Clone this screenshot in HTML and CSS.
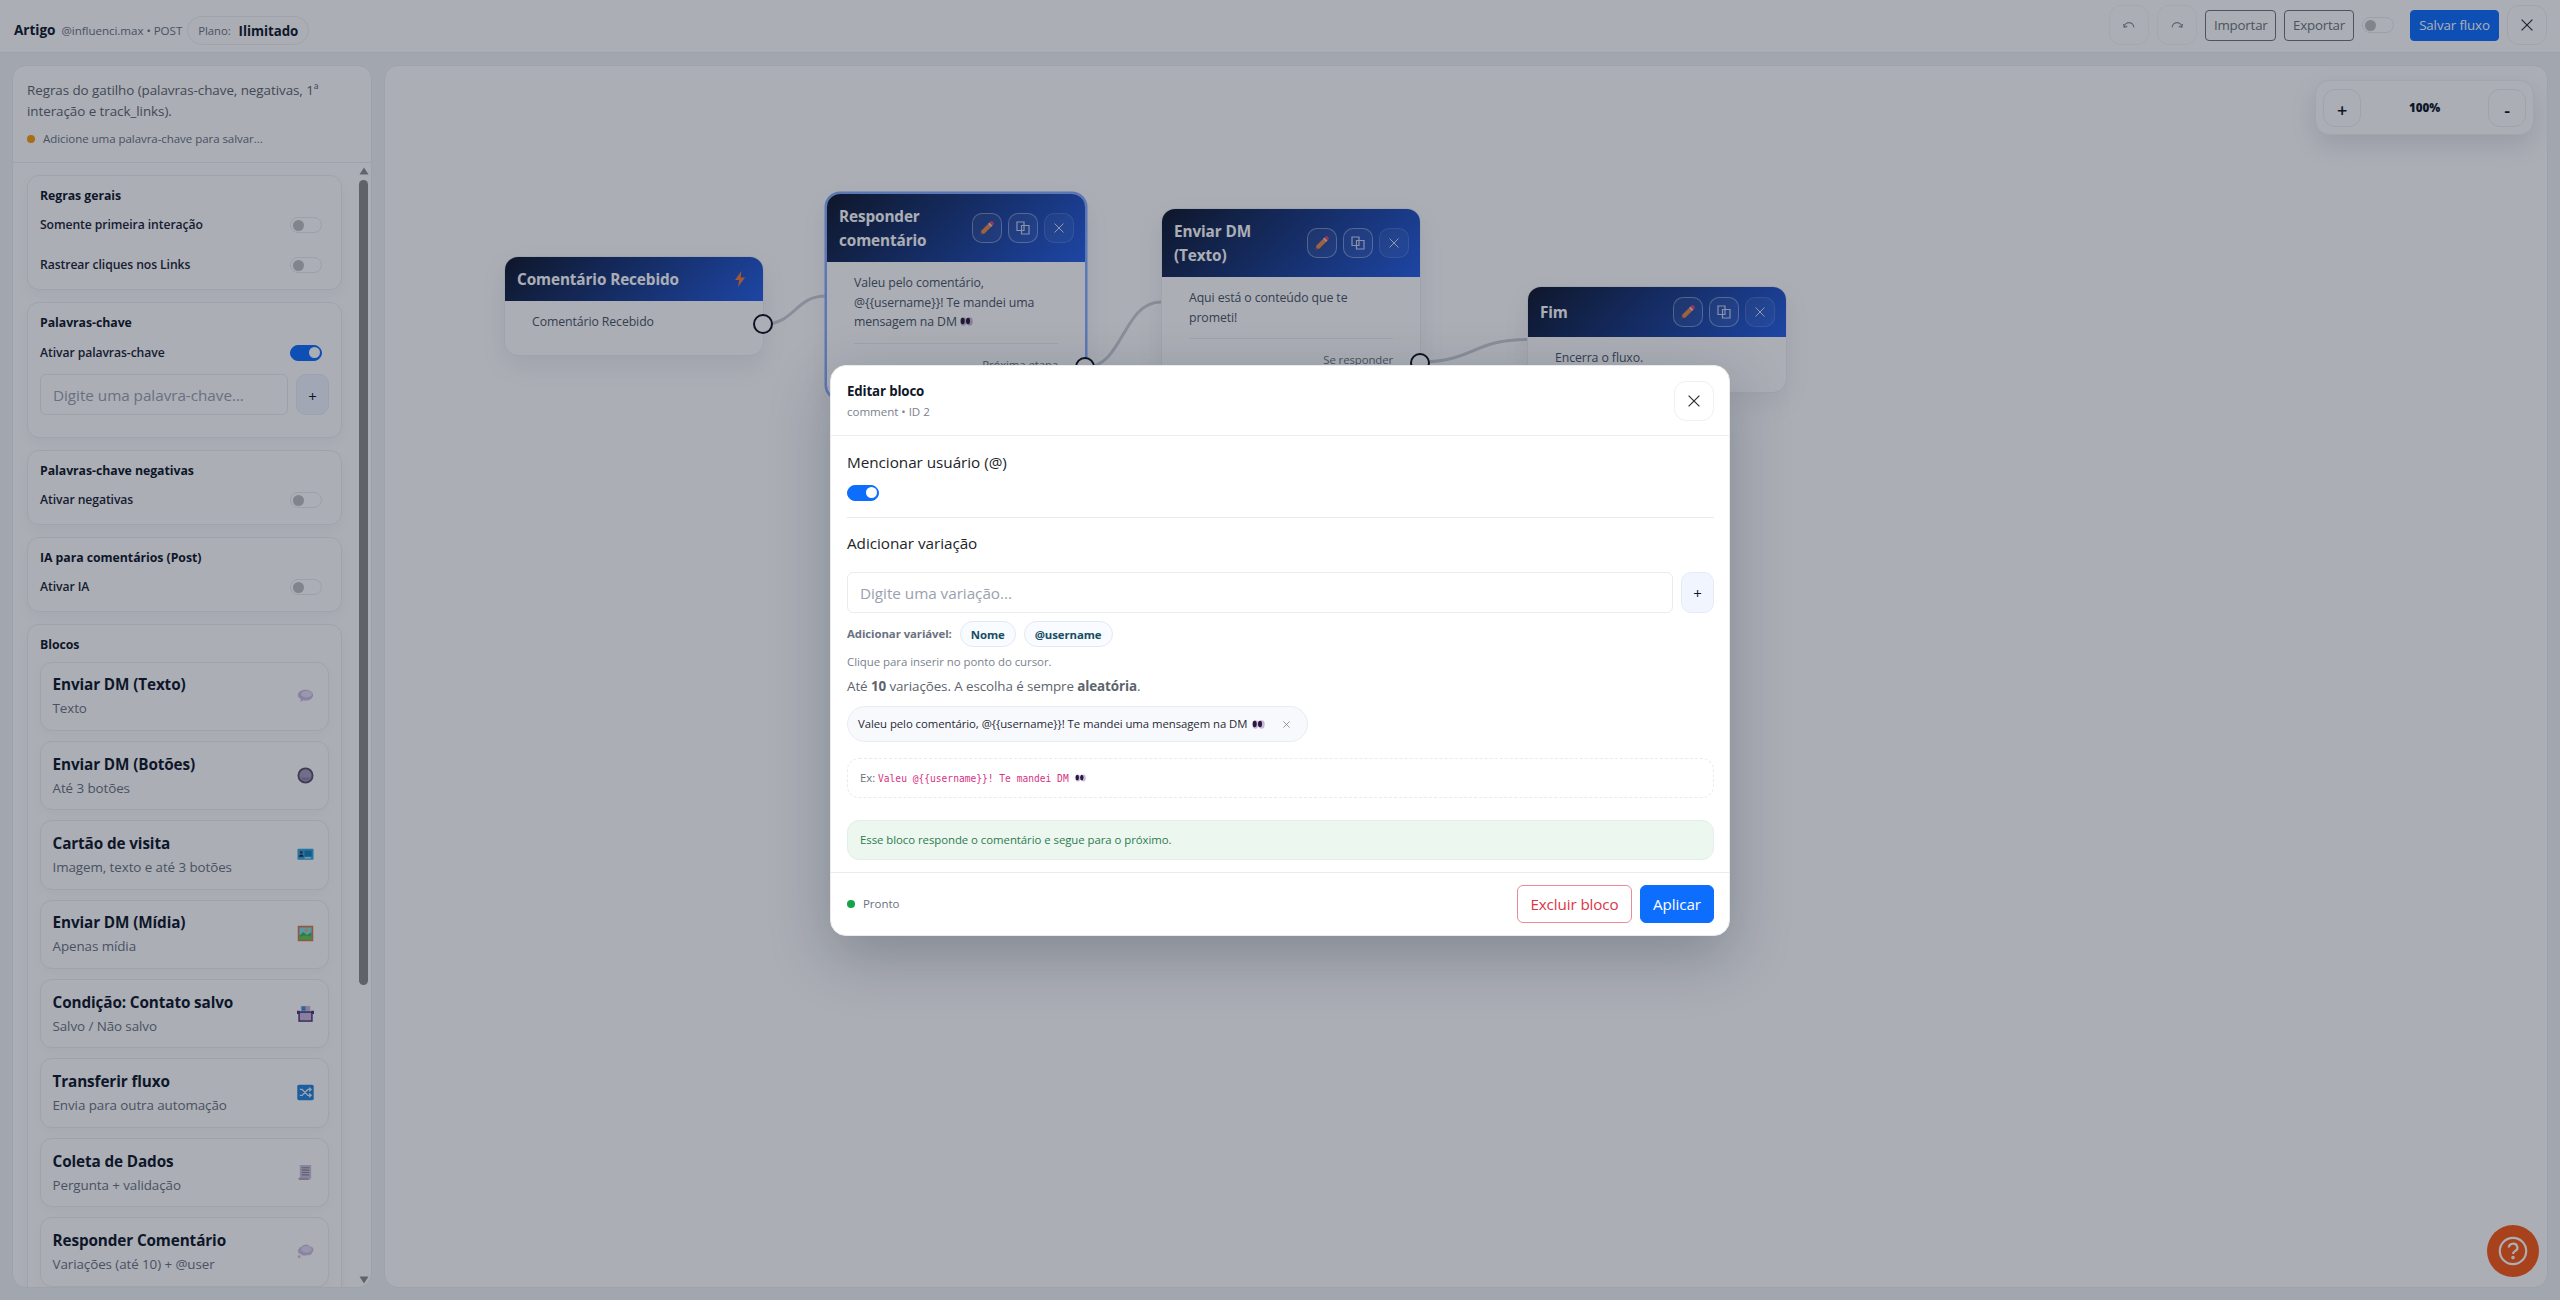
FILE: index.html
```html
<!DOCTYPE html>
<html lang="pt-BR">
<head>
    <meta charset="UTF-8">
    <title>Editor de fluxo</title>
    <link rel="stylesheet" href="styles.css">
</head>
<body>
    <svg class="sprite" width="0" height="0">
        <symbol id="i-x" viewBox="0 0 12 12"><path d="M.6.6l10.8 10.8M11.4.6L.6 11.4" fill="none" stroke="currentColor" stroke-width="1.2"/></symbol>
        <symbol id="i-copy" viewBox="0 0 14 14"><path d="M1 1h7v8.500H1zM5.500 4.500h7.500V13H5.500z" fill="none" stroke="currentColor" stroke-width="1.200"/></symbol>
        <symbol id="i-pencil" viewBox="0 0 16 16">
            <path d="M1.500 14.500l1-4L10.300 2.700l3 3-7.800 7.800z" fill="#f0884a"/>
            <path d="M9.200 3.800l1.300-1.300 3 3-1.300 1.300z" fill="#d6d3dd"/>
            <path d="M10.500 2.500l1-1a1.500 1.500 0 0 1 2.100 0l.9.900a1.500 1.500 0 0 1 0 2.100l-1 1z" fill="#e8485a"/>
            <path d="M1.500 14.500l.6-2.200 1.600 1.600z" fill="#6b4a5e"/>
        </symbol>
        <symbol id="i-bolt" viewBox="0 0 10 16"><path d="M6.400 0L0 9h4.200L3 16l7-9.500H5.600z" fill="#f57a3c"/></symbol>
        <symbol id="i-eyes" viewBox="0 0 13 9">
            <ellipse cx="3.300" cy="4.500" rx="3" ry="4.200" fill="#c9b6dc"/><ellipse cx="9.700" cy="4.500" rx="3" ry="4.200" fill="#c9b6dc"/>
            <ellipse cx="2.700" cy="4" rx="2" ry="3.300" fill="#2b1a3a"/><ellipse cx="8" cy="4" rx="2" ry="3.300" fill="#2b1a3a"/>
        </symbol>
        <symbol id="i-chat" viewBox="0 0 18 18">
            <path d="M9 3c4.600 0 8 2.500 8 5.700s-3.400 5.600-8 5.600c-.8 0-1.600-.1-2.300-.2L3.500 16l.6-3.200C2.200 11.800 1 10.400 1 8.700 1 5.500 4.400 3 9 3z" fill="#cbb8e4"/>
            <ellipse cx="10" cy="7.600" rx="5.800" ry="3.500" fill="#e4dcf0"/>
        </symbol>
        <symbol id="i-thought" viewBox="0 0 18 18">
            <path d="M5 4a4.500 3.500 0 0 1 8.500-.3A3.500 3.500 0 0 1 16 10a4 3.500 0 0 1-5.500 2.700A4.500 3 0 0 1 4 12 3.500 3.500 0 0 1 2 6a3.500 3 0 0 1 3-2z" fill="#cdbfe2"/>
            <ellipse cx="10" cy="6.800" rx="5.500" ry="3.600" fill="#e2daee"/>
            <circle cx="2.300" cy="14.500" r="1.500" fill="#cdbfe2"/>
        </symbol>
        <symbol id="i-radio" viewBox="0 0 18 18"><circle cx="9" cy="9" r="7.500" fill="#a79db8" stroke="#584f68" stroke-width="2"/><path d="M4 11a5.500 5.500 0 0 0 10 0z" fill="#9080ae"/></symbol>
        <symbol id="i-card" viewBox="0 0 18 18">
            <rect x=".5" y="3" width="17" height="11.500" rx="1" fill="#30a8e0"/>
            <rect x="8" y="5" width="7.500" height="6" fill="#1880bd"/><rect x="8" y="12" width="6.500" height="1.200" fill="#eee"/>
            <circle cx="4.500" cy="6.800" r="1.500" fill="#47304f"/><path d="M2 11.500c0-3.500 5-3.500 5 0z" fill="#2b2038"/>
        </symbol>
        <symbol id="i-image" viewBox="0 0 18 18">
            <rect x=".8" y=".8" width="16.400" height="16.400" fill="#d77b4c"/><rect x="2.600" y="2.600" width="12.800" height="12.800" fill="#85dcec"/>
            <path d="M2.600 11l4-3.500 4 3 4.800-3v8H2.600z" fill="#3bb46b"/><path d="M2.600 13c4-2 9-2 12.800-.3v2.700H2.600z" fill="#6fca3d"/><circle cx="10" cy="5.500" r="1.600" fill="#f5b32b"/>
        </symbol>
        <symbol id="i-ballot" viewBox="0 0 18 18">
            <rect x="4" y="1" width="10" height="8" fill="#c9b9db"/><rect x="5" y="1.500" width="4" height="4.500" fill="#2f92d8"/>
            <rect x="2.200" y="7.500" width="13.600" height="9.500" fill="#c9b9db" stroke="#54357f" stroke-width="1.600"/>
            <path d="M0 6h3v3.500H0zM15 6h3v3.500h-3z" fill="#54357f"/>
        </symbol>
        <symbol id="i-shuffle" viewBox="0 0 18 18">
            <rect x=".3" y=".8" width="17.400" height="16.400" rx="1.800" fill="#2585dc"/>
            <path d="M3 5.800h2.500l6 6.200H14M3 12h2.500l6-6.200H14M12.800 3.800l2.200 2-2.200 2M12.800 10l2.200 2-2.200 2" fill="none" stroke="#e9effa" stroke-width="1.300"/>
        </symbol>
        <symbol id="i-receipt" viewBox="0 0 18 18">
            <path d="M3 1h12v14l-2 2H4l-1-2z" fill="#cdc4d9"/><path d="M1.500 14.500H12c0 1.500.4 2.500 1.500 2.500H3.500c-1.400 0-2-1-2-2.500z" fill="#b3a5c6"/>
            <path d="M5 4h8M5 6.500h8M5 9h8M5 11.500h8" stroke="#8d8499" stroke-width="1.200"/>
        </symbol>
        <symbol id="i-undo" viewBox="0 0 12 9"><path d="M1.200 6A4.800 4.600 0 0 1 10.800 6.500M.5 2.800l.6 3.400 3.200-.8" fill="none" stroke="currentColor" stroke-width="1.100"/></symbol>
    </svg>

    <header class="topbar">
        <div class="topbar-info">
            <span class="topbar-title">Artigo</span>
            <span class="topbar-meta">@influenci.max • POST</span>
            <span class="plan">Plano: <b>Ilimitado</b></span>
        </div>
        <div class="topbar-actions">
            <button class="icon-btn faded"><svg width="12" height="9"><use href="#i-undo"/></svg></button>
            <button class="icon-btn faded redo"><svg class="flip" width="12" height="9"><use href="#i-undo"/></svg></button>
            <button class="btn btn-sm btn-outline">Importar</button>
            <button class="btn btn-sm btn-outline export">Exportar</button>
            <span class="switch auto"></span>
            <button class="btn btn-sm btn-primary">Salvar fluxo</button>
            <button class="icon-btn close"><svg width="12" height="12"><use href="#i-x"/></svg></button>
        </div>
    </header>

    <main class="layout">
        <aside class="sidebar">
            <div class="sidebar-head">
                <div class="sidebar-desc">Regras do gatilho (palavras-chave, negativas, 1ª interação e track_links).</div>
                <div class="status"><span class="dot warn"></span>Adicione uma palavra-chave para salvar...</div>
            </div>
            <div class="sidebar-body">
                <div class="sidebar-scroll">
                    <section class="card">
                        <h6>Regras gerais</h6>
                        <div class="row">Somente primeira interação <span class="switch"></span></div>
                        <div class="row">Rastrear cliques nos Links <span class="switch"></span></div>
                    </section>
                    <section class="card card-keywords">
                        <h6>Palavras-chave</h6>
                        <div class="row">Ativar palavras-chave <span class="switch on"></span></div>
                        <div class="input-row">
                            <input type="text" placeholder="Digite uma palavra-chave...">
                            <button class="add-btn">+</button>
                        </div>
                    </section>
                    <section class="card">
                        <h6>Palavras-chave negativas</h6>
                        <div class="row">Ativar negativas <span class="switch"></span></div>
                    </section>
                    <section class="card">
                        <h6>IA para comentários (Post)</h6>
                        <div class="row">Ativar IA <span class="switch"></span></div>
                    </section>
                    <section class="card card-blocks">
                        <h6>Blocos</h6>
                        <div class="block"><div><b>Enviar DM (Texto)</b><small>Texto</small></div><svg width="17" height="17"><use href="#i-chat"/></svg></div>
                        <div class="block"><div><b>Enviar DM (Botões)</b><small>Até 3 botões</small></div><svg width="17" height="17"><use href="#i-radio"/></svg></div>
                        <div class="block"><div><b>Cartão de visita</b><small>Imagem, texto e até 3 botões</small></div><svg width="17" height="17"><use href="#i-card"/></svg></div>
                        <div class="block"><div><b>Enviar DM (Mídia)</b><small>Apenas mídia</small></div><svg width="17" height="17"><use href="#i-image"/></svg></div>
                        <div class="block"><div><b>Condição: Contato salvo</b><small>Salvo / Não salvo</small></div><svg width="17" height="17"><use href="#i-ballot"/></svg></div>
                        <div class="block"><div><b>Transferir fluxo</b><small>Envia para outra automação</small></div><svg width="17" height="17"><use href="#i-shuffle"/></svg></div>
                        <div class="block"><div><b>Coleta de Dados</b><small>Pergunta + validação</small></div><svg width="17" height="17"><use href="#i-receipt"/></svg></div>
                        <div class="block"><div><b>Responder Comentário</b><small>Variações (até 10) + @user</small></div><svg width="17" height="17"><use href="#i-thought"/></svg></div>
                    </section>
                </div>
                <div class="scrollbar">
                    <svg width="10" height="8" viewBox="0 0 10 8"><path d="M5 .5L9.500 7.500H.5z"/></svg>
                    <div class="track"><div class="thumb"></div></div>
                    <svg width="10" height="8" viewBox="0 0 10 8"><path d="M.5.5h9L5 7.500z"/></svg>
                </div>
            </div>
        </aside>

        <section class="canvas">
            <svg class="edges" width="2162" height="1221">
                <path d="M379 258C410 258 410 230 441 230"/>
                <path d="M701 301C738 301 738 236 776 236"/>
                <path d="M1035 296C1088 296 1088 273.500 1142 273.500"/>
            </svg>

            <div class="node n1">
                <div class="node-head">Comentário Recebido <svg class="bolt" width="10" height="16"><use href="#i-bolt"/></svg></div>
                <div class="node-body">Comentário Recebido</div>
                <span class="port"></span>
            </div>

            <div class="node n2 selected">
                <div class="node-head">Responder<br>comentário
                    <div class="tools">
                        <span><svg width="16" height="16"><use href="#i-pencil"/></svg></span>
                        <span><svg width="14" height="14"><use href="#i-copy"/></svg></span>
                        <span class="del"><svg width="10" height="10"><use href="#i-x"/></svg></span>
                    </div>
                </div>
                <div class="node-body">Valeu pelo comentário, @{{username}}! Te mandei uma mensagem na DM <svg width="13" height="9"><use href="#i-eyes"/></svg>
                    <div class="node-out">Próxima etapa</div>
                </div>
                <span class="port"></span>
            </div>

            <div class="node n3">
                <div class="node-head">Enviar DM<br>(Texto)
                    <div class="tools">
                        <span><svg width="16" height="16"><use href="#i-pencil"/></svg></span>
                        <span><svg width="14" height="14"><use href="#i-copy"/></svg></span>
                        <span class="del"><svg width="10" height="10"><use href="#i-x"/></svg></span>
                    </div>
                </div>
                <div class="node-body">Aqui está o conteúdo que te<br>prometi!
                    <div class="node-out">Se responder</div>
                </div>
                <span class="port"></span>
            </div>

            <div class="node n4">
                <div class="node-head">Fim
                    <div class="tools">
                        <span><svg width="16" height="16"><use href="#i-pencil"/></svg></span>
                        <span><svg width="14" height="14"><use href="#i-copy"/></svg></span>
                        <span class="del"><svg width="10" height="10"><use href="#i-x"/></svg></span>
                    </div>
                </div>
                <div class="node-body">Encerra o fluxo.</div>
            </div>

            <div class="zoom">
                <button>+</button>
                <span>100%</span>
                <button>-</button>
            </div>
        </section>
    </main>

    <div class="help">
        <svg width="30" height="30" viewBox="0 0 30 30" fill="none" stroke="#fff" stroke-width="2.200">
            <circle cx="15" cy="15" r="13.200"/>
            <path d="M10.800 11.600a4.300 3.900 0 1 1 6.200 3.500c-1.500.8-2 1.400-2 3"/>
            <circle cx="15" cy="21.600" r=".7" fill="#fff"/>
        </svg>
    </div>

    <div class="overlay">
        <div class="modal">
            <div class="modal-head">
                <div>
                    <div class="modal-title">Editar bloco</div>
                    <div class="modal-sub">comment • ID 2</div>
                </div>
                <button class="icon-btn close"><svg width="12" height="12"><use href="#i-x"/></svg></button>
            </div>
            <div class="modal-body">
                <label>Mencionar usuário (@)</label>
                <span class="switch on"></span>
                <div class="divider"></div>
                <label>Adicionar variação</label>
                <div class="input-row">
                    <input type="text" placeholder="Digite uma variação...">
                    <button class="add-btn">+</button>
                </div>
                <div class="vars"><b>Adicionar variável:</b><span class="pill">Nome</span><span class="pill">@username</span></div>
                <div class="hint">Clique para inserir no ponto do cursor.</div>
                <div class="limit">Até <b>10</b> variações. A escolha é sempre <b>aleatória</b>.</div>
                <div class="chip">Valeu pelo comentário, @{{username}}! Te mandei uma mensagem na DM <svg class="eyes" width="13" height="9"><use href="#i-eyes"/></svg><svg class="remove" width="7" height="7"><use href="#i-x"/></svg></div>
                <div class="example">Ex: <code>Valeu @{{username}}! Te mandei DM</code> <svg width="11" height="8"><use href="#i-eyes"/></svg></div>
                <div class="info">Esse bloco responde o comentário e segue para o próximo.</div>
            </div>
            <div class="modal-foot">
                <div class="status"><span class="dot ok"></span>Pronto</div>
                <button class="btn btn-danger">Excluir bloco</button>
                <button class="btn btn-primary">Aplicar</button>
            </div>
        </div>
    </div>
</body>
</html>
```

FILE: styles.css
```css
* { box-sizing: border-box; }
body { margin: 0; height: 1300px; overflow: hidden; display: flex; flex-direction: column; background: #f1f3f6; color: #0f172a; font-family: "Open Sans", "Noto Sans", sans-serif; font-size: 15.3px; line-height: 24px; letter-spacing: -0.05px; }
button, input { font-family: inherit; letter-spacing: inherit; margin: 0; }
svg { flex: none; }
b { font-weight: 700; }
.sprite { position: absolute; }

/* topbar */
.topbar { height: 53px; flex: none; display: flex; justify-content: space-between; padding: 5px 13px 0 14px; background: #fff; border-bottom: 1px solid #ebedf1; }
.topbar-info { height: 40px; display: flex; align-items: flex-end; white-space: nowrap; }
.topbar-title { font-size: 13.6px; font-weight: 700; line-height: 30px; margin-right: 6px; }
.topbar-meta { font-size: 11.6px; line-height: 28px; color: #6b7280; margin-right: 5px; }
.plan { display: flex; align-items: center; gap: 8px; height: 29px; padding: 0 10px; border: 1px solid #eceef2; border-radius: 15px; background: #fdfdfe; color: #6b7280; font-size: 11.3px; }
.plan b { color: #0f172a; font-size: 13.3px; }
.topbar-actions { height: 40px; display: flex; align-items: center; }
.icon-btn { width: 40px; height: 40px; padding: 0; display: flex; align-items: center; justify-content: center; background: #fff; border: 1px solid #eff0f3; border-radius: 12px; color: #2b2f36; }
.faded { color: #8a8f98; border-color: #f5f6f8; margin-right: 8px; }
.flip { transform: scaleX(-1); }
.btn { border: 1px solid; border-radius: 6px; height: 38px; padding: 0 12px; font-size: 15.2px; line-height: 24px; letter-spacing: -0.1px; white-space: nowrap; }
.btn-sm { height: 31px; padding: 0 8px; border-radius: 4px; font-size: 13.3px; line-height: 21px; }
.btn-outline { width: 71px; background: #fff; color: #6c757d; border-color: #6c757d; margin-right: 8px; letter-spacing: -0.2px; }
.btn-sm.btn-primary { width: 89px; }
.export { width: 70px; }
.btn-primary { background: #0d6efd; border-color: #0d6efd; color: #fff; }
.btn-danger { background: #fff; border-color: #ea8b95; color: #dc3545; }
.topbar .close { margin-left: 8px; }

.switch { display: block; width: 32px; height: 16px; border: 1px solid #e8eaee; border-radius: 8px; background: #fff; flex: none; }
.switch::before { content: ""; display: block; width: 11px; height: 11px; margin: 1.5px; border-radius: 50%; background: #bfbfbf; }
.switch.on { background: #0d6efd; border-color: #0d6efd; }
.switch.on::before { background: #fff; margin-left: 17.5px; }
.auto { margin-right: 16px; }

/* sidebar */
.layout { flex: 1; min-height: 0; display: flex; gap: 12px; padding: 12px; }
.sidebar { width: 360px; flex: none; display: flex; flex-direction: column; overflow: hidden; background: #fff; border: 1px solid #ebedf1; border-radius: 14px; }
.sidebar-head { height: 97px; flex: none; padding: 14px; border-bottom: 1px solid #ebedf1; }
.sidebar-desc { font-size: 13.4px; line-height: 21.4px; color: #5d646d; }
.status { display: flex; align-items: center; font-size: 11.5px; line-height: 18px; color: #6b7280; }
.sidebar .status { margin-top: 7px; }
.dot { width: 8px; height: 8px; border-radius: 50%; margin-right: 8px; }
.warn { background: #f59e0b; }
.ok { background: #16a34a; }
.sidebar-body { flex: 1; min-height: 0; display: flex; }
.sidebar-scroll { flex: 1; overflow: hidden; padding: 11.500px 14px; }
.scrollbar { width: 15px; padding: 4px 2px 3px; display: flex; flex-direction: column; align-items: center; fill: #8d8d8d; }
.track { flex: 1; width: 9px; padding-top: 5px; }
.thumb { height: 805px; border-radius: 5px; background: #8b8b8b; }

.card { height: 75px; margin-bottom: 12px; padding: 10px 12px 0; border: 1px solid #eceef2; border-radius: 12px; background: #fff; box-shadow: 0 6px 14px rgba(15,23,42,.04); }
.card:first-child { height: 115.500px; }
.card-keywords { height: 135.500px; }
.card-blocks { height: auto; }
.card h6 { margin: 0; font-size: 12.3px; font-weight: 700; line-height: 19.5px; }
.row { display: flex; align-items: center; justify-content: space-between; height: 40px; padding-right: 7px; font-size: 12.2px; font-weight: 600; letter-spacing: -0.09px; color: #1b2433; }
.input-row { display: flex; gap: 8px; }
.input-row input { flex: 1; min-width: 0; height: 41px; padding: 1px 12px 0; border: 1px solid #e9ebef; border-radius: 6px; background: #fff; font-size: 15.3px; outline: none; }
.input-row input::placeholder { color: #9aa1ae; }
.add-btn { width: 33px; height: 41px; padding: 2px 0 0; background: #f0f5ff; border: 1px solid #e6ebf3; border-radius: 10px; font-size: 15px; font-weight: 400; color: #0f172a; }
.card .input-row { margin-top: 1.500px; }

.block { display: flex; align-items: center; justify-content: space-between; height: 69.4px; margin-bottom: 10px; padding: 0 14px 1px 11.500px; border: 1px solid #eceef2; border-radius: 12px; background: #fff; box-shadow: 0 4px 12px rgba(15,23,42,.03); }
.card-blocks h6 { margin-bottom: 7.500px; }
.block b { display: block; line-height: 25px; letter-spacing: -0.12px; }
.block small { display: block; font-size: 13.4px; line-height: 22px; letter-spacing: -0.08px; color: #6b7280; }

/* canvas */
.canvas { flex: 1; position: relative; overflow: hidden; background: #fff; border: 1px solid #ebedf1; border-radius: 14px; }
.edges { position: absolute; left: 0; top: 0; fill: none; stroke: #ccced5; stroke-width: 3; }
.node { position: absolute; width: 260px; border: 1px solid #eceef2; border-radius: 14px; background: #fff; box-shadow: 0 10px 26px rgba(15,23,42,.08); }
.n1 { left: 119px; top: 190px; height: 100px; }
.n2 { left: 441px; top: 127px; height: 206px; }
.n3 { left: 776px; top: 142px; height: 189px; }
.n4 { left: 1142px; top: 220px; height: 107px; }
.selected { border-color: #86abff; box-shadow: 0 0 0 1.500px #86abff, 0 10px 26px rgba(15,23,42,.08); }
.node-head { display: flex; align-items: center; justify-content: space-between; padding: 10px 11px 10px 12px; border-radius: 13px 13px 0 0; color: #fff; font-weight: 700; letter-spacing: -0.1px; background: linear-gradient(135deg, #0f172a, #265fe6); }
.bolt { margin-right: 7px; }
.tools { display: flex; gap: 6px; }
.tools span { width: 30px; height: 30px; display: flex; align-items: center; justify-content: center; border: 1px solid rgba(255,255,255,.38); border-radius: 10px; background: rgba(255,255,255,.06); color: rgba(255,255,255,.75); }
.tools .del { border-color: rgba(255,255,255,.14); color: #d6deef; }
.node-body { padding: 11px 27px 0; font-size: 12.3px; line-height: 19.5px; letter-spacing: -0.1px; color: #4b5563; }
.node-out { margin-top: 11px; padding-top: 12px; border-top: 1px solid #eceef2; text-align: right; font-size: 11.4px; line-height: 18px; color: #6b7280; }
.port { position: absolute; right: -10px; width: 20px; height: 20px; border: 2px solid #0b1220; border-radius: 50%; background: #fff; }
.n1 .port { top: 57px; }
.n2 .port { top: 163px; }
.n3 .port { top: 144px; }

.zoom { position: absolute; right: 13px; top: 14px; width: 219px; height: 55px; padding: 0 7px; display: flex; align-items: center; justify-content: space-between; border: 1px solid #eff1f4; border-radius: 14px; background: #fff; box-shadow: 0 10px 26px rgba(15,23,42,.12); font-size: 11.6px; font-weight: 800; }
.zoom button { width: 38px; height: 38px; padding: 4px 0 0; border: 1px solid #eceef2; border-radius: 12px; background: #fff; color: #0f172a; font-size: 18px; font-weight: 600; }

.help { position: absolute; left: 2487px; top: 1225px; width: 52px; height: 52px; display: flex; align-items: center; justify-content: center; border-radius: 50%; background: #fa5a14; }

/* modal */
.overlay { position: absolute; left: 0; top: 0; width: 2560px; height: 1300px; display: flex; align-items: center; justify-content: center; background: rgba(15,23,42,.35); }
.modal { width: 900px; height: 571px; display: flex; flex-direction: column; border: 1px solid #e9ebef; border-radius: 16px; background: #fff; box-shadow: 0 20px 60px rgba(15,23,42,.25); }
.modal-head { height: 70px; flex: none; display: flex; justify-content: space-between; padding: 15px 15px 0 16px; border-bottom: 1px solid #eceef1; }
.modal-title { font-size: 13.3px; font-weight: 700; line-height: 21px; letter-spacing: -0.15px; }
.modal-sub { font-size: 11.6px; line-height: 20px; color: #7b828e; }
.modal-body { flex: 1; padding: 14px 15px 0 16px; }
.modal-body label { display: block; color: #212529; }
.modal-body .switch { margin-top: 11px; }
.divider { height: 1px; margin: 16px 0 13px; background: #e9ebee; }
.modal .input-row { margin-top: 17px; }
.vars { display: flex; align-items: center; height: 26px; margin-top: 8px; font-size: 11.4px; letter-spacing: -0.08px; color: #6b7280; }
.pill { height: 26px; margin-left: 8px; padding: 0 10px; border: 1px solid #e3e9f3; border-radius: 13px; background: #f8fbff; color: #164e63; font-weight: 700; line-height: 25px; }
.hint { margin-top: 6px; font-size: 11.45px; line-height: 18px; color: #7b828e; }
.limit { margin-top: 4px; font-size: 13.4px; line-height: 22px; letter-spacing: -0.09px; color: #5d646d; }
.chip { display: flex; align-items: center; width: 461px; height: 36px; margin-top: 9px; padding: 1px 17px 0 10px; border: 1px solid #e9ecf1; border-radius: 18px; background: #f8f9fc; font-size: 11.35px; color: #1f2937; white-space: nowrap; }
.eyes { margin-left: 5px; }
.remove { margin-left: auto; color: #6b7280; }
.example, .info { height: 40px; border-radius: 12px; padding: 0 12px; font-size: 11.4px; line-height: 38px; }
.example { margin-top: 16px; border: 1px dashed #e9ebef; color: #6b7280; }
.example code { font: 9.6px "DejaVu Sans Mono", monospace; letter-spacing: 0; color: #d63384; }
.example svg { margin-left: 3px; }
.info { margin-top: 22px; border: 1px solid #e1efe7; background: #ecf7f0; color: #2f7a4f; }
.modal-foot { height: 63px; flex: none; display: flex; align-items: center; padding: 1px 15px 0 16px; border-top: 1px solid #e9ebee; }
.modal-foot .status { flex: 1; }
.modal-foot .btn { width: 74px; margin-left: 8px; }
.modal-foot .btn-danger { width: 115px; }
```
